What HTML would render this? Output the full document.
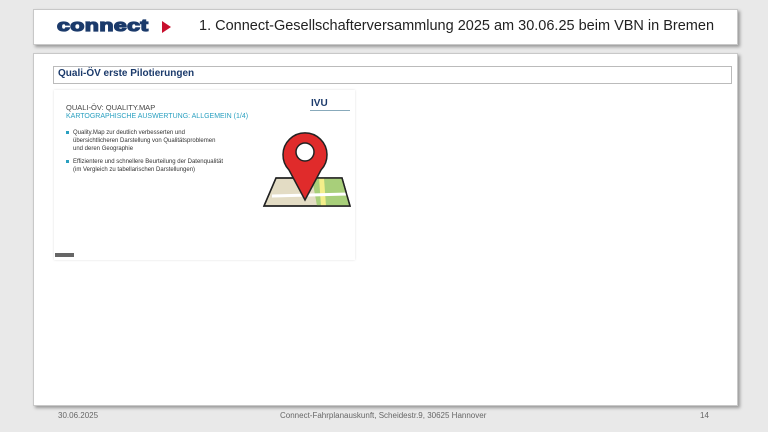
<!DOCTYPE html>
<html><head><meta charset="utf-8"><style>
body{margin:0;width:768px;height:432px;background:#e9e9e9;position:relative;overflow:hidden;font-family:"Liberation Sans",sans-serif}
.box{position:absolute;background:#fff;border:1px solid #c8c8c8;box-shadow:2px 2px 3px rgba(0,0,0,.35)}
.abs{position:absolute;white-space:nowrap}
</style></head><body>
<div class="box" style="left:33px;top:9px;width:703px;height:34px"></div>
<div class="abs" style="left:57px;top:16px;font:900 17px 'Liberation Sans',sans-serif;color:#1b3a6b;letter-spacing:0.3px;transform:scaleX(1.36);transform-origin:left;-webkit-text-stroke:1.3px #1b3a6b">connect</div>
<svg class="abs" style="left:162px;top:21px" width="10" height="12"><polygon points="0,0 9,6 0,12" fill="#c8102e"/></svg>
<div class="abs" style="left:199px;top:18px;font-size:14.5px;color:#222">1. Connect-Gesellschafterversammlung 2025 am 30.06.25 beim VBN in Bremen</div>
<div class="box" style="left:33px;top:53px;width:703px;height:351px"></div>
<div class="abs" style="left:53px;top:66px;width:677px;height:16px;border:1px solid #bbb;background:#fff"></div>
<div class="abs" style="left:58px;top:68px;font-size:10px;font-weight:bold;color:#1b3a6b">Quali-ÖV erste Pilotierungen</div>
<div class="abs" style="left:54px;top:90px;width:301px;height:170px;background:#fff;box-shadow:0 0 2px #ddd"></div>
<div class="abs" style="left:66px;top:103px;font-size:7.5px;color:#444">QUALI-ÖV: QUALITY.MAP</div>
<div class="abs" style="left:66px;top:113px;font-size:7px;color:#2aa0c0">KARTOGRAPHISCHE AUSWERTUNG: ALLGEMEIN (1/4)</div>
<div class="abs" style="left:66px;top:131px;width:3px;height:3px;background:#2aa0c0"></div>
<div class="abs" style="left:73px;top:129px;font-size:6px;line-height:8px;color:#333">Quality.Map zur deutlich verbesserten und<br>übersichtlicheren Darstellung von Qualitätsproblemen<br>und deren Geographie</div>
<div class="abs" style="left:66px;top:160px;width:3px;height:3px;background:#2aa0c0"></div>
<div class="abs" style="left:73px;top:158px;font-size:6px;line-height:8px;color:#333">Effizientere und schnellere Beurteilung der Datenqualität<br>(im Vergleich zu tabellarischen Darstellungen)</div>
<div class="abs" style="left:311px;top:98px;font-size:10px;font-weight:900;color:#1b3a6b">IVU</div>
<div class="abs" style="left:310px;top:110px;width:40px;height:1px;background:#8ab"></div>
<div class="abs" style="left:55px;top:253px;width:19px;height:4px;background:#666"></div>
<svg class="abs" style="left:262px;top:128px" width="92" height="82">
<polygon points="14,50 80,50 88,78 2,78" fill="#e3dcc4" stroke="#222" stroke-width="1.5"/>
<polygon points="50,50 80,50 88,78 55,78" fill="#a8cf7a"/>
<polygon points="57,50 62,50 64,78 59,78" fill="#f4ee8a"/>
<polyline points="10,68 86,66" stroke="#fff" stroke-width="3" fill="none"/>
<polygon points="14,50 80,50 88,78 2,78" fill="none" stroke="#222" stroke-width="1.5"/>
<path d="M43,72 L27,42 A22,22 0 1 1 59,42 Z" fill="#e02b2b" stroke="#222" stroke-width="1.5"/>
<circle cx="43" cy="24" r="9" fill="#fff" stroke="#222" stroke-width="1.5"/>
</svg>
<div class="abs" style="left:58px;top:411px;font-size:8px;color:#666">30.06.2025</div>
<div class="abs" style="left:280px;top:411px;font-size:8px;color:#666">Connect-Fahrplanauskunft, Scheidestr.9, 30625 Hannover</div>
<div class="abs" style="left:700px;top:411px;font-size:8px;color:#666">14</div>
</body></html>
